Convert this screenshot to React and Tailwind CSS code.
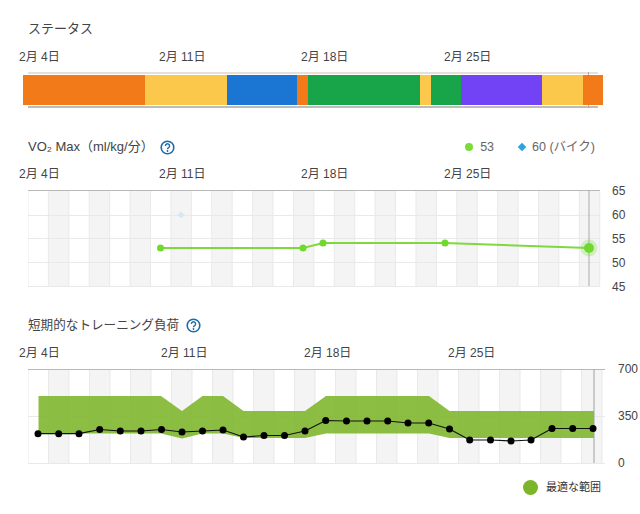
import React from "react";

const F = "font-['Liberation_Sans','Noto_Sans_CJK_JP',sans-serif]";

function Help() {
  return (
    <svg width="15" height="15" viewBox="0 0 15 15" className="shrink-0">
      <circle cx="7.5" cy="7.5" r="6.3" fill="none" stroke="#1c6ca8" strokeWidth="1.6" />
      <path d="M5.4 5.9a2.1 2.1 0 1 1 3.2 1.8c-.7.4-1.1.8-1.1 1.5" fill="none" stroke="#1c6ca8" strokeWidth="1.4" />
      <circle cx="7.5" cy="11" r=".9" fill="#1c6ca8" />
    </svg>
  );
}

function Dates({ widths, labels, className }) {
  return (
    <div className={"flex h-[16px] items-center text-[12px] leading-none text-[#444] whitespace-nowrap " + className}>
      {labels.map((l, i) => (
        <span key={l} style={{ width: widths[i] }}>{l}</span>
      ))}
    </div>
  );
}

const segs = [
  ["w-[122px]", "bg-[#f37a18]"],
  ["w-[82px]", "bg-[#fcc84c]"],
  ["w-[70px]", "bg-[#1a76d2]"],
  ["w-[11px]", "bg-[#f37a18]"],
  ["w-[112px]", "bg-[#18a54a]"],
  ["w-[10.5px]", "bg-[#fcc84c]"],
  ["w-[30.5px]", "bg-[#18a54a]"],
  ["w-[81px]", "bg-[#7243f5]"],
  ["w-[40.5px]", "bg-[#fcc84c]"],
  ["w-[20.5px]", "bg-[#f37a18]"],
];

function Stripes({ x0, step, right, top, bottom }) {
  const r = [];
  for (let x = x0; x < right; x += step * 2) {
    r.push(<rect key={x} x={x} y={top} width={Math.min(step, right - x)} height={bottom - top} fill="#f4f4f4" />);
  }
  const l = [];
  for (let x = x0 - step, i = 0; x <= right; x += step, i++) {
    l.push(<line key={i} x1={x} x2={x} y1={top} y2={bottom} stroke="#e9e9e9" />);
  }
  return <>{r}{l}</>;
}

function VoChart() {
  const pts = [[132.5, 58], [275, 58], [295, 53], [417, 53], [561, 58]];
  return (
    <svg width="574" height="98" viewBox="0 0 574 98" className="block">
      <Stripes x0={20.4} step={20.42} right={572} top={0} bottom={96} />
      {[25, 48, 72, 96].map((y) => (
        <line key={y} x1="0" x2="572" y1={y + 0.5} y2={y + 0.5} stroke="#e9e9e9" />
      ))}
      <line x1="0" x2="572" y1="0.5" y2="0.5" stroke="#b8b8b8" />
      <line x1="561" x2="561" y1="0" y2="96" stroke="#ababab" strokeWidth="1" />
      <path d="M153 21.5l3.5 3.5-3.5 3.5-3.5-3.5z" fill="#d5e7f3" />
      <polyline points={pts.map((p) => p.join(",")).join(" ")} fill="none" stroke="#80d83f" strokeWidth="2" />
      {pts.slice(0, 4).map((p) => (
        <circle key={p[0]} cx={p[0]} cy={p[1]} r="3.5" fill="#70d92f" />
      ))}
      <circle cx="561" cy="58" r="8.5" fill="#70d92f" opacity="0.25" />
      <circle cx="561" cy="58" r="5" fill="#70d92f" />
    </svg>
  );
}

function LoadChart() {
  const xs = [38, 58.7, 79, 99.7, 120.3, 141, 161.5, 182, 202.5, 223, 243.5, 264, 284.5, 305, 325.7, 346.5, 367, 387.7, 408, 428.7, 449.5, 469.7, 490.5, 511, 531, 552, 572.7, 593];
  const ys = [433.7, 433.7, 433.7, 429.5, 431, 431, 429.5, 432, 431, 430, 437, 435.5, 435.5, 431, 420.5, 421, 421, 421, 423, 423, 429, 440, 440, 441, 440, 428.5, 428.5, 428.5];
  const line = xs.map((x, i) => [x - 28, ys[i] - 369]);
  const band = "10.5,27 133,27 154,42 174.5,27 195,27 215.5,42 277,42 298,27 401,27 421.5,42 566,42 566,69 421.5,69 401,64.5 298,64.5 277,69 215.5,69 195,64.5 174.5,64.5 154,69.5 133,64.5 10.5,64.5";
  return (
    <svg width="578" height="96" viewBox="0 0 578 96" className="block">
      <Stripes x0={20.5} step={20.5} right={577} top={0} bottom={94} />
      <line x1="0" x2="577" y1="47.5" y2="47.5" stroke="#e9e9e9" />
      <line x1="0" x2="577" y1="94.5" y2="94.5" stroke="#e9e9e9" />
      <line x1="0" x2="577" y1="0.5" y2="0.5" stroke="#b8b8b8" />
      <polygon points={band} fill="#7db52a" fillOpacity="0.88" />
      <line x1="566" x2="566" y1="0" y2="94" stroke="#a0a0a0" strokeWidth="1" />
      <polyline points={line.map((p) => p.join(",")).join(" ")} fill="none" stroke="#111" strokeWidth="1.2" />
      {line.map((p) => (
        <circle key={p[0]} cx={p[0]} cy={p[1]} r="3.5" fill="#000" />
      ))}
    </svg>
  );
}

function Axis({ labels, h }) {
  return (
    <div className="flex flex-col justify-between text-[12px] leading-none text-[#444]" style={{ height: h }}>
      {labels.map((l) => <span key={l}>{l}</span>)}
    </div>
  );
}

export default function App() {
  return (
    <div className={"w-[640px] h-[514px] overflow-hidden bg-white text-[#444] " + F}>
      <h2 className="pl-[28px] pt-[20px] h-[40px] text-[13px] leading-[18px] font-normal">ステータス</h2>
      <Dates className="pl-[19px] mt-[9px]" widths={[140, 142, 143, 100]} labels={["2月 4日", "2月 11日", "2月 18日", "2月 25日"]} />
      <div className="relative ml-[28px] mt-[7px] w-[570px] h-[36px] border-t-[2px] border-b-[2px] border-t-[#e6e0d8] border-b-[#bcbcbc] flex items-center">
        <div className="absolute left-[560px] -top-[2px] -bottom-[2px] w-px bg-[#b5a99a]" />
        <div className="relative flex -ml-[5px] w-[580px] h-[30px] shrink-0">
          {segs.map(([w, c], i) => <div key={i} className={w + " " + c} />)}
        </div>
      </div>

      <div className="flex items-center h-[20px] mt-[29px] pl-[28px] text-[13px]">
        <span className="whitespace-nowrap">VO₂ Max（ml/kg/分）</span>
        <span className="ml-[6px]"><Help /></span>
        <div className="ml-auto mr-[45px] flex items-center text-[12.5px] text-[#666]">
          <span className="w-[8px] h-[8px] rounded-full bg-[#7bdc37]" />
          <span className="ml-[7px]">53</span>
          <span className="ml-[25px] w-[6px] h-[6px] rotate-45 bg-[#2aa3de]" />
          <span className="ml-[7px]">60 (バイク)</span>
        </div>
      </div>
      <Dates className="pl-[19px] mt-[9px]" widths={[140, 142, 143, 100]} labels={["2月 4日", "2月 11日", "2月 18日", "2月 25日"]} />
      <div className="flex items-start ml-[28px] mt-[8px] h-[96px]">
        <VoChart />
        <div className="ml-[10px] -mt-[5px]"><Axis labels={["65", "60", "55", "50", "45"]} h={108} /></div>
      </div>

      <div className="flex items-center h-[20px] mt-[29px] pl-[28px] text-[12.6px]">
        <span className="whitespace-nowrap">短期的なトレーニング負荷</span>
        <span className="ml-[7px]"><Help /></span>
      </div>
      <Dates className="pl-[19px] mt-[10px]" widths={[142, 143, 144, 100]} labels={["2月 4日", "2月 11日", "2月 18日", "2月 25日"]} />
      <div className="flex items-start ml-[28px] mt-[8px] h-[94px]">
        <LoadChart />
        <div className="ml-[12px] -mt-[6px] relative"><Axis labels={["700", "350", "0"]} h={106} /></div>
      </div>
      <div className="flex items-center mt-[16px] ml-[523px] h-[16px] text-[11px] text-[#333]">
        <span className="w-[15px] h-[15px] rounded-full bg-[#7db52a]" />
        <span className="ml-[8px] whitespace-nowrap">最適な範囲</span>
      </div>
    </div>
  );
}
